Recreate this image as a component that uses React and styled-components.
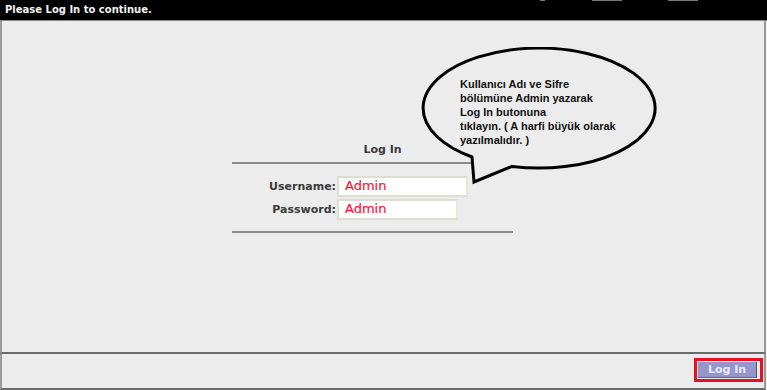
import React from 'react';
import styled, { createGlobalStyle } from 'styled-components';

const GlobalStyle = createGlobalStyle`
  html, body {
    margin: 0;
    padding: 0;
    background: #ececec;
  }
  * {
    box-sizing: border-box;
  }
`;

const Page = styled.div`
  width: 767px;
  height: 390px;
  display: flex;
  flex-direction: column;
  background: #ececec;
  font-family: "DejaVu Sans", Verdana, sans-serif;
  overflow: hidden;
`;

const TopBar = styled.div`
  height: 21px;
  background: #000;
  color: #f4f4f4;
  font-size: 10px;
  font-weight: bold;
  padding: 4px 0 0 5px;
  border-bottom: 1px solid #888;
  position: relative;
`;

const TopMark = styled.span`
  position: absolute;
  top: 0;
  left: ${(p) => p.$left}px;
  width: ${(p) => p.$width}px;
  height: 1px;
  background: #777;
`;

const Main = styled.div`
  flex: 1;
  position: relative;
  border-left: 2px solid #9a9a9a;
  border-right: 2px solid #9a9a9a;
  border-bottom: 2px solid #6a6a6a;
  margin-right: 1px;
  padding: 122px 0 0 230px;
`;

const LoginBox = styled.div`
  width: 281px;
  display: flex;
  flex-direction: column;
`;

const Title = styled.div`
  text-align: center;
  font-size: 11px;
  font-weight: bold;
  color: #3a3a3a;
  padding-left: 20px;
  height: 19px;
  line-height: 14px;
`;

const Rule = styled.div`
  height: 2px;
  background: #8a8a8a;
`;

const Fields = styled.div`
  display: flex;
  flex-direction: column;
  gap: 2px;
  padding: 12px 0 11px;
`;

const Row = styled.div`
  display: flex;
  align-items: center;
  height: 21px;
`;

const Label = styled.label`
  width: 105px;
  text-align: right;
  font-size: 11px;
  font-weight: bold;
  color: #3a3a3a;
  padding-right: 1px;
`;

const Input = styled.div`
  width: ${(p) => p.$width}px;
  height: 21px;
  background: #fff;
  border: 2px solid #dcdfcf;
  border-right-color: #e6e8dc;
  color: #f5183a;
  font-size: 13px;
  padding: 0 0 0 6px;
  line-height: 16px;
  -webkit-text-stroke: 0.2px #f5183a;
`;

const Balloon = styled.div`
  position: absolute;
  left: 418px;
  top: 26px;
  width: 240px;
  height: 140px;
`;

const BalloonText = styled.div`
  position: absolute;
  left: 40px;
  top: 30px;
  font-family: "Liberation Sans", Arial, sans-serif;
  font-size: 11px;
  font-weight: bold;
  line-height: 14px;
  color: #111;
`;

const Footer = styled.div`
  height: 36px;
  display: flex;
  justify-content: flex-end;
  align-items: flex-start;
  padding: 4px 1px 0 0;
  border-right: 2px solid #9a9a9a;
  border-left: 2px solid #9a9a9a;
  border-bottom: 2px solid #6a6a6a;
  margin-right: 1px;
`;

const ButtonFrame = styled.div`
  border: 3px solid #e8101e;
  padding: 1px 3px 1px 1px;
  display: flex;
`;

const Button = styled.button`
  width: 59px;
  height: 16px;
  border: none;
  border-right: 1px solid #505060;
  border-bottom: 1px solid #3a8a3a;
  background: #9696cc;
  color: #ececf6;
  font-family: "DejaVu Sans", Verdana, sans-serif;
  font-size: 11px;
  font-weight: bold;
  padding: 0;
  line-height: 14px;
`;

export default function App() {
  return (
    <Page>
      <GlobalStyle />
      <TopBar>
        Please Log In to continue.
        <TopMark $left={540} $width={5} />
        <TopMark $left={592} $width={30} />
        <TopMark $left={668} $width={30} />
      </TopBar>
      <Main>
        <LoginBox>
          <Title>Log In</Title>
          <Rule />
          <Fields>
            <Row>
              <Label>Username:</Label>
              <Input $width={131}>Admin</Input>
            </Row>
            <Row>
              <Label>Password:</Label>
              <Input $width={121}>Admin</Input>
            </Row>
          </Fields>
          <Rule />
        </LoginBox>
        <Balloon>
          <svg width="240" height="140" viewBox="0 0 240 140">
            <path
              d="M52 110 A 116 60 0 1 1 92 119.4 L 54 135 Z"
              fill="#ececec"
              stroke="#000"
              strokeWidth="3"
              strokeLinejoin="miter"
            />
          </svg>
          <BalloonText>
            Kullanıcı Adı ve Sifre
            <br />
            bölümüne Admin yazarak
            <br />
            Log In butonuna
            <br />
            tıklayın. ( A harfi büyük olarak
            <br />
            yazılmalıdır. )
          </BalloonText>
        </Balloon>
      </Main>
      <Footer>
        <ButtonFrame>
          <Button>Log In</Button>
        </ButtonFrame>
      </Footer>
    </Page>
  );
}
